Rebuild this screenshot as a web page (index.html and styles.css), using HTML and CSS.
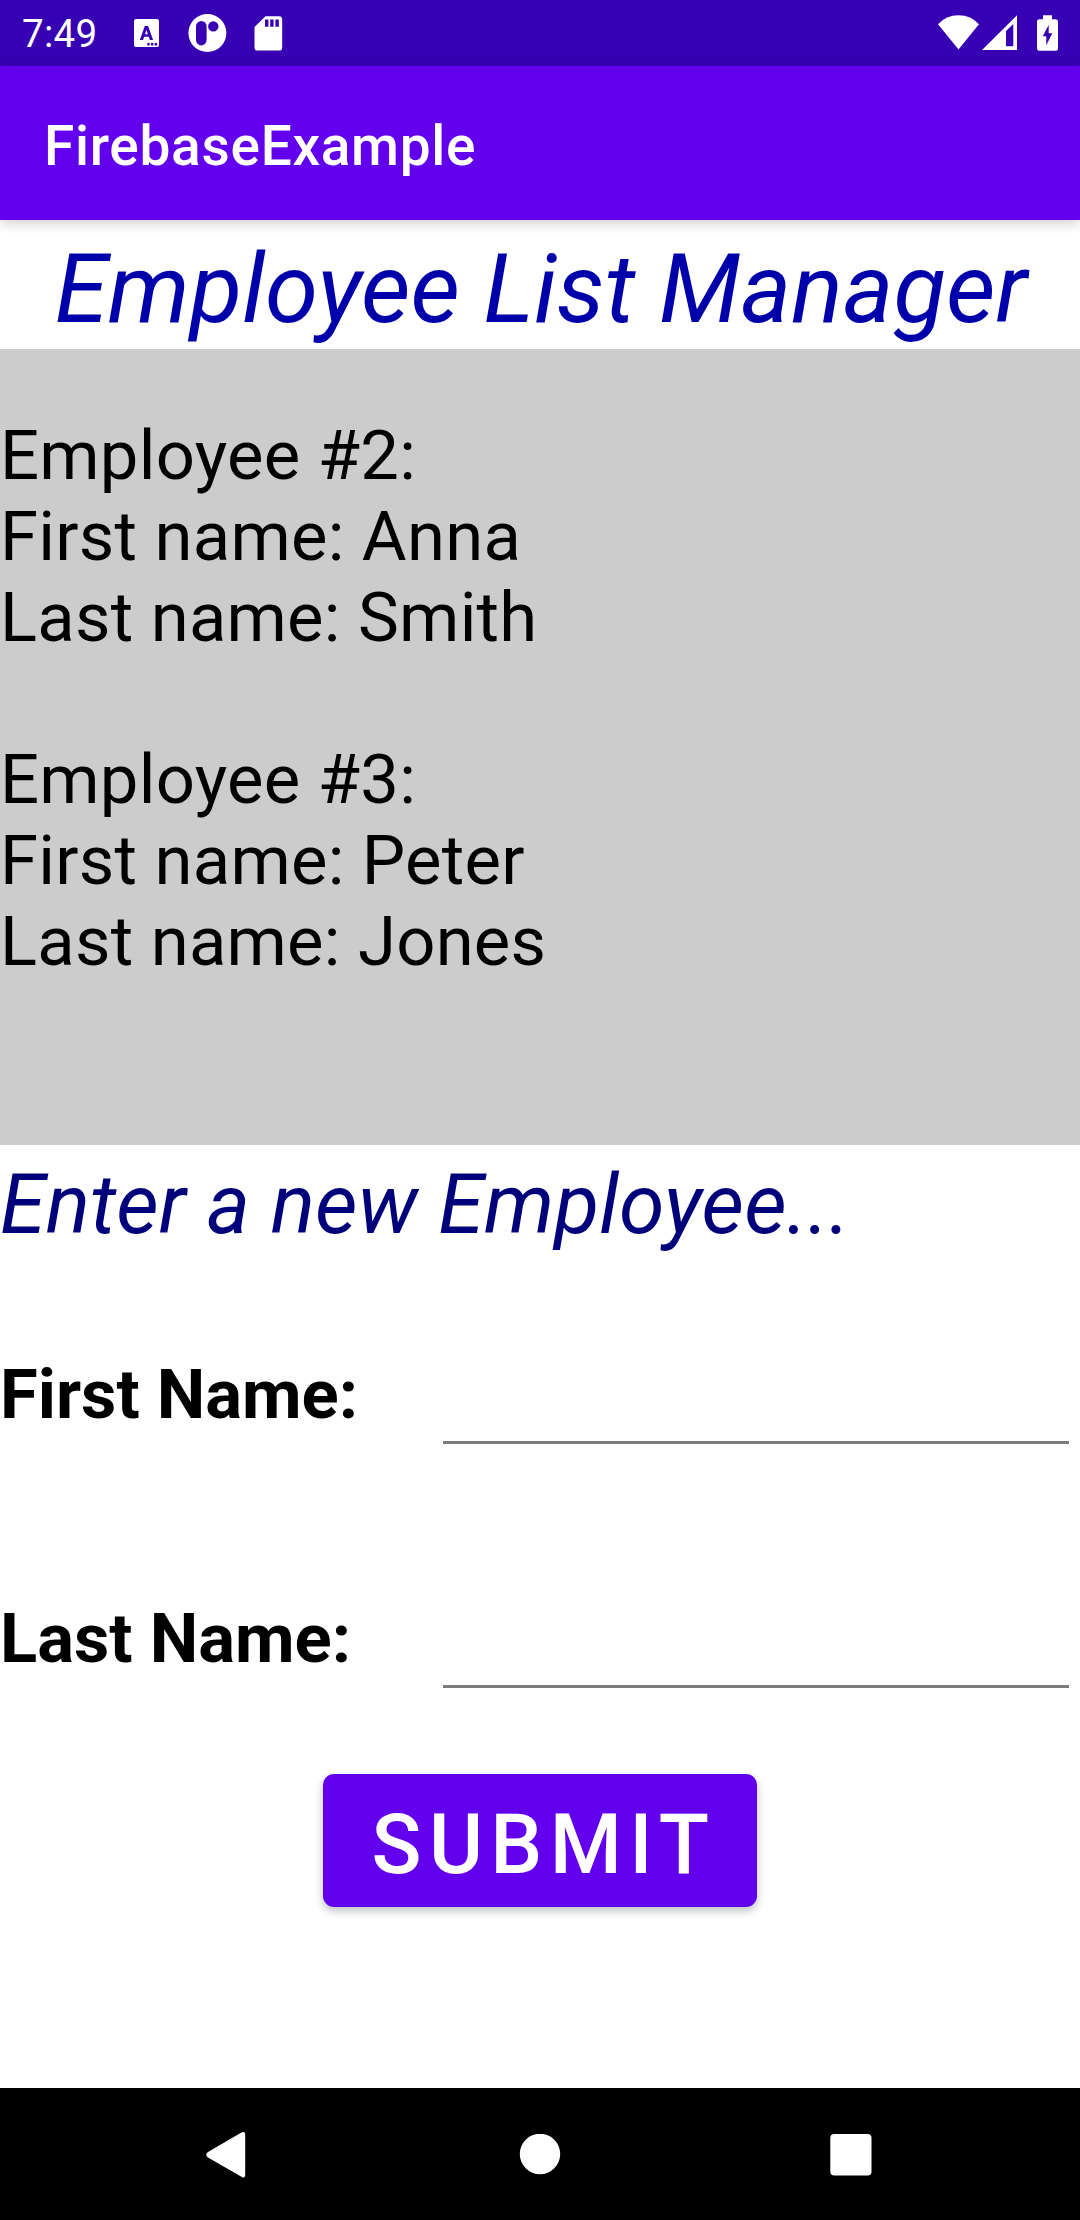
FILE: index.html
```html
<!DOCTYPE html>
<html lang="en">
<head>
<meta charset="utf-8">
<title>FirebaseExample</title>
<link rel="stylesheet" href="styles.css">
</head>
<body>
<div class="status-bar">
  <span class="clock">7:49</span>
  <svg class="notifications" width="152" height="66" viewBox="132 0 152 66" fill="#fff">
    <path fill-rule="evenodd" d="M136 19h21a2 2 0 0 1 2 2v24a2 2 0 0 1-2 2h-21a2 2 0 0 1-2-2V21a2 2 0 0 1 2-2zM144.800 26l-5 14h3.200l1.100-3.200h4.700l1.100 3.200h3.200l-5-14zM145 34.200l1.450-4.300 1.450 4.300zM147.300 43v2.400h2.400V43zM151 43v2.400h2.400V43zM154.700 43v2.400h2.400V43z"/>
    <path fill-rule="evenodd" d="M207.400 14a19 19 0 1 1 0 38a19 19 0 0 1 0-38zM201.300 21a5.300 5.300 0 0 0-5.300 5.300v13.800a5.300 5.300 0 0 0 10.600 0V26.300a5.300 5.300 0 0 0-5.300-5.300zM213.300 21.200a5.200 5.200 0 1 0 0 10.400a5.200 5.200 0 0 0 0-10.400z"/>
    <path fill-rule="evenodd" d="M265.500 16.200H279a3.200 3.200 0 0 1 3.200 3.200v28a3.200 3.200 0 0 1-3.200 3.200h-21.300a3.200 3.200 0 0 1-3.200-3.200V27zM265 19.500v7.200h3.400v-7.200zM270.200 19.500v7.200h3.400v-7.200zM275.400 19.500v7.200h3.400v-7.200z"/>
  </svg>
  <svg class="system" width="124" height="66" viewBox="936 0 124 66" fill="#fff">
    <path d="M938 24.300Q946 15.300 958.500 15.300T979 24.300L958.500 49.500z"/>
    <path fill-rule="evenodd" d="M1017 15.200V50h-35zM1013.300 24l-7.300 7v15.200h7.300z"/>
    <path fill-rule="evenodd" d="M1043 15.200h9v4h3.500a2.500 2.500 0 0 1 2.500 2.500v26.500a2.500 2.500 0 0 1-2.500 2.500h-16a2.500 2.500 0 0 1-2.500-2.500V21.700a2.500 2.500 0 0 1 2.500-2.500h3.500zM1048.700 24.700l-5.900 11.500h3.500v9l6-12h-3.600z"/>
  </svg>
</div>
<header class="app-bar">FirebaseExample</header>
<main class="content">
  <h1 class="title">Employee List Manager</h1>
  <section class="list">
    <p class="employee">Employee #2:<br>First name: Anna<br>Last name: Smith</p>
    <p class="employee">Employee #3:<br>First name: Peter<br>Last name: Jones</p>
  </section>
  <form class="form">
    <h2 class="prompt">Enter a new Employee...</h2>
    <div class="field">
      <label class="label" for="first">First Name:</label>
      <input class="input" id="first" type="text">
    </div>
    <div class="field">
      <label class="label" for="last">Last Name:</label>
      <input class="input" id="last" type="text">
    </div>
    <button class="submit" type="button">SUBMIT</button>
  </form>
</main>
<nav class="nav-bar">
  <svg width="40" height="46" viewBox="0 0 40 46"><path fill="#fff" d="M35 .8Q39.200-1.500 39.200 3V42.500Q39.200 47 35 44.500L2 25.500Q-1.500 22.700 2 20z"/></svg>
  <svg width="42" height="42" viewBox="0 0 42 42"><circle cx="21" cy="20" r="20.200" fill="#fff"/></svg>
  <svg width="42" height="42" viewBox="0 0 42 42"><rect x=".3" width="41.200" height="41.500" rx="4" fill="#fff"/></svg>
</nav>
</body>
</html>
```
FILE: styles.css
```css
* {
  box-sizing: border-box;
}

body {
  margin: 0;
  width: 1080px;
  height: 2220px;
  display: flex;
  flex-direction: column;
  overflow: hidden;
  background: #fff;
  color: #000;
  font-family: Roboto, sans-serif;
}

svg {
  display: block;
}

.status-bar {
  flex: none;
  display: flex;
  align-items: center;
  height: 66px;
  padding: 0 20px 0 21px;
  background: #3700b3;
  color: #fff;
}

.clock {
  width: 111px;
  font-size: 38.5px;
  line-height: 46px;
  padding: 2px 0 0 1px;
  letter-spacing: 0.3px;
}

.system {
  margin-left: auto;
}

.app-bar {
  flex: none;
  position: relative;
  height: 154px;
  padding: 48px 44px 0;
  background: #6200ee;
  box-shadow: 0 3px 12px rgba(0, 0, 0, 0.2);
  color: #fff;
  font-size: 55px;
  font-weight: 500;
  line-height: 64px;
  letter-spacing: 0.7px;
}

.content {
  flex: 1;
}

.title {
  height: 129px;
  margin: 0;
  padding: 13px 0 0 2px;
  color: #0000aa;
  font-size: 96.25px;
  font-style: italic;
  font-weight: 400;
  line-height: 113px;
  text-align: center;
  white-space: nowrap;
}

.list {
  display: flex;
  flex-direction: column;
  gap: 81px;
  height: 796px;
  padding-top: 66px;
  background: #ccc;
}

.employee {
  margin: 0;
  font-size: 68.75px;
  line-height: 81px;
  letter-spacing: 0.25px;
}

.form {
  display: flex;
  flex-direction: column;
  padding-top: 11px;
}

.prompt {
  margin: 0 0 101px;
  color: #00007a;
  font-size: 82.5px;
  font-style: italic;
  font-weight: 400;
  line-height: 97px;
  letter-spacing: 0.15px;
}

.field {
  display: flex;
  height: 90px;
  margin-bottom: 154px;
  padding-right: 11px;
}

.field:nth-of-type(2) {
  margin-bottom: 86px;
}

.label {
  width: 443px;
  font-size: 68.75px;
  font-weight: 700;
  line-height: 81px;
}

.input {
  flex: 1;
  min-width: 0;
  padding: 0;
  border: 0;
  border-bottom: 3px solid #7c7c7c;
  background: transparent;
  font: inherit;
  font-size: 49.5px;
  outline: none;
}

.submit {
  align-self: center;
  width: 434px;
  height: 133px;
  padding: 8px 0 0 8px;
  border: 0;
  border-radius: 11px;
  background: #6200ee;
  box-shadow: 0 4px 8px rgba(0, 0, 0, 0.25);
  color: #fff;
  font-family: inherit;
  font-size: 82.5px;
  font-weight: 500;
  line-height: 97px;
  letter-spacing: 7.37px;
}

.nav-bar {
  flex: none;
  display: flex;
  justify-content: space-between;
  align-items: flex-start;
  height: 132px;
  padding: 46px 208px 0 206px;
  background: #000;
}

.nav-bar svg:first-child {
  margin-top: -2px;
}

.nav-bar svg:nth-child(2) {
  margin-left: 3px;
}
```
